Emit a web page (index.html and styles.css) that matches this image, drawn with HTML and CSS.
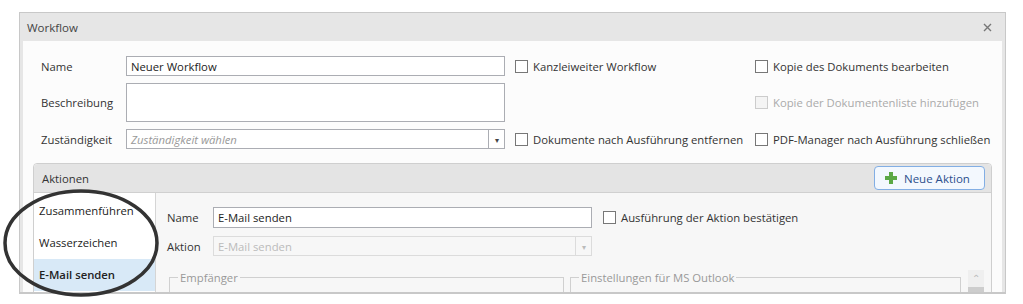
FILE: index.html
```html
<!DOCTYPE html>
<html lang="de">
<head>
  <meta charset="UTF-8" />
  <title>Workflow</title>
  <link rel="stylesheet" href="styles.css">
</head>
<body>
  <div class="window">
    <div class="titlebar">
      <span>Workflow</span>
      <svg class="close" width="9" height="9" viewBox="0 0 9 9"><path d="M1 1L8 8M8 1L1 8" stroke="#777" stroke-width="1.4"/></svg>
    </div>
    <div class="content">
      <div class="form">
        <label class="lbl">Name</label>
        <div class="input">Neuer Workflow</div>
        <label class="check"><span class="box"></span>Kanzleiweiter Workflow</label>
        <label class="check"><span class="box"></span>Kopie des Dokuments bearbeiten</label>

        <label class="lbl">Beschreibung</label>
        <div class="input textarea"></div>
        <div></div>
        <label class="check disabled"><span class="box"></span>Kopie der Dokumentenliste hinzufügen</label>

        <label class="lbl">Zuständigkeit</label>
        <div class="input combo">
          <span class="placeholder">Zuständigkeit wählen</span>
          <span class="drop">&#9662;</span>
        </div>
        <label class="check"><span class="box"></span>Dokumente nach Ausführung entfernen</label>
        <label class="check"><span class="box"></span>PDF-Manager nach Ausführung schließen</label>
      </div>

      <div class="panel">
        <div class="panel-head">
          <span>Aktionen</span>
          <button class="add-btn">
            <svg width="14" height="14" viewBox="0 0 14 14"><path d="M7 1V13M1 7H13" stroke="#5ba845" stroke-width="4"/></svg>
            Neue Aktion
          </button>
        </div>
        <div class="panel-body">
          <ul class="list">
            <li>Zusammenführen</li>
            <li>Wasserzeichen</li>
            <li class="selected">E-Mail senden</li>
          </ul>
          <div class="detail">
            <div class="detail-form">
              <label class="lbl">Name</label>
              <div class="input">E-Mail senden</div>
              <label class="check"><span class="box"></span>Ausführung der Aktion bestätigen</label>
              <label class="lbl">Aktion</label>
              <div class="input combo disabled">
                <span>E-Mail senden</span>
                <span class="drop">&#9662;</span>
              </div>
              <div></div>
            </div>
            <div class="groups">
              <fieldset class="group recipients"><legend>Empfänger</legend></fieldset>
              <fieldset class="group outlook"><legend>Einstellungen für MS Outlook</legend></fieldset>
              <div class="scrollbar">
                <span class="up">&#8963;</span>
                <span class="thumb"></span>
              </div>
            </div>
          </div>
        </div>
      </div>
    </div>
  </div>

  <svg class="annotation" width="170" height="304" viewBox="0 0 170 304">
    <ellipse cx="81" cy="243" rx="76" ry="52" fill="none" stroke="#333" stroke-width="3.5"/>
  </svg>
</body>
</html>
```

FILE: styles.css
```css
body {
  font-family: "Open Sans", "Noto Sans", sans-serif;
  font-size: 11.3px;
  color: #333;
  background-color: white;
  margin: 0;
  padding: 0;
  position: relative;
  height: 304px;
  overflow: hidden;
}
.window {
  box-sizing: border-box;
  margin: 12px 0 0 19px;
  width: 987px;
  height: 282px;
  border: 1px solid #c8c8c8;
  border-bottom: 2px solid #c8c8c8;
  background-color: #e6e6e6;
  padding: 0 3px;
  display: flex;
  flex-direction: column;
  overflow: hidden;
}
.titlebar {
  height: 28px;
  display: flex;
  align-items: center;
  justify-content: space-between;
  padding: 0 10px 0 4px;
  color: #444;
  font-size: 11.5px;
}
.content {
  flex: 1;
  background-color: #fcfcfc;
  padding: 15px 10px 0 10px;
  overflow: hidden;
}
.form {
  display: grid;
  grid-template-columns: 75px 379px 230px 1fr;
  grid-template-rows: 20px 39px 20px;
  column-gap: 10px;
  row-gap: 7px;
  padding-left: 8px;
  align-items: center;
}
.lbl {
  color: #333;
}
.input {
  box-sizing: border-box;
  height: 100%;
  border: 1px solid #abadb3;
  background-color: white;
  padding: 0 4px;
  display: flex;
  align-items: center;
  color: #222;
}
.textarea {
  align-items: flex-start;
}
.combo {
  padding-right: 0;
  justify-content: space-between;
}
.placeholder {
  color: #999;
  font-style: italic;
}
.drop {
  box-sizing: border-box;
  width: 16px;
  height: 100%;
  border-left: 1px solid #abadb3;
  display: flex;
  align-items: center;
  justify-content: center;
  font-size: 8px;
  color: #444;
}
.check {
  display: flex;
  align-items: center;
  gap: 5px;
  color: #333;
}
.box {
  box-sizing: border-box;
  width: 13px;
  height: 13px;
  border: 1px solid #777;
  background-color: white;
}
.check.disabled {
  color: #aaa;
}
.check.disabled .box {
  border-color: #ccc;
  background-color: #f4f4f4;
}
.panel {
  margin-top: 14px;
  border: 1px solid #cfcfcf;
  border-radius: 4px 4px 0 0;
  height: 200px;
}
.panel-head {
  height: 28px;
  background-color: #e4e4e4;
  border-bottom: 1px solid #d0d0d0;
  border-radius: 4px 4px 0 0;
  display: flex;
  align-items: center;
  justify-content: space-between;
  padding: 0 6px 0 8px;
}
.add-btn {
  height: 24px;
  width: 111px;
  border: 1px solid #82aee4;
  border-radius: 4px;
  background-color: #f3f8fe;
  color: #2c4f8c;
  font-family: inherit;
  font-size: 11.5px;
  display: flex;
  align-items: center;
  gap: 6px;
  padding: 0 0 0 9px;
}
.panel-body {
  display: flex;
  height: 100%;
}
.list {
  list-style: none;
  margin: 0;
  padding: 2px 0 0 0;
  width: 121px;
  border-right: 1px solid #d5d5d5;
  background-color: white;
}
.list li {
  height: 32px;
  line-height: 32px;
  padding-left: 5px;
  color: #222;
}
.list li.selected {
  background-color: #d8e9f7;
  font-weight: 600;
}
.detail {
  flex: 1;
  background-color: #f7f7f7;
  padding: 14px 0 0 11px;
}
.detail-form {
  display: grid;
  grid-template-columns: 46px 379px 1fr;
  grid-template-rows: 21px 20px;
  row-gap: 8px;
  align-items: center;
}
.detail-form .check {
  margin-left: 11px;
}
.combo.disabled {
  background-color: #f7f7f7;
  border-color: #dcdcdc;
  color: #bbb;
}
.combo.disabled .drop {
  border-color: #dcdcdc;
  color: #bbb;
}
.groups {
  display: flex;
  margin-top: 14px;
  height: 40px;
}
.group {
  margin: 0;
  padding: 0;
  border: 1px solid #d0d0d0;
  height: 40px;
}
.group legend {
  color: #999;
  padding: 0 2px;
  margin-left: 8px;
}
.recipients {
  margin-left: 2px;
  width: 393px;
}
.outlook {
  margin-left: 6px;
  width: 389px;
}
.scrollbar {
  margin-left: 7px;
  width: 16px;
  height: 40px;
  background-color: #efefef;
  display: flex;
  flex-direction: column;
  align-items: center;
}
.up {
  color: #bbb;
  font-size: 10px;
  height: 17px;
  line-height: 17px;
}
.thumb {
  width: 16px;
  height: 20px;
  background-color: #cdcdcd;
}
.annotation {
  position: absolute;
  left: 0;
  top: 0;
}
```
